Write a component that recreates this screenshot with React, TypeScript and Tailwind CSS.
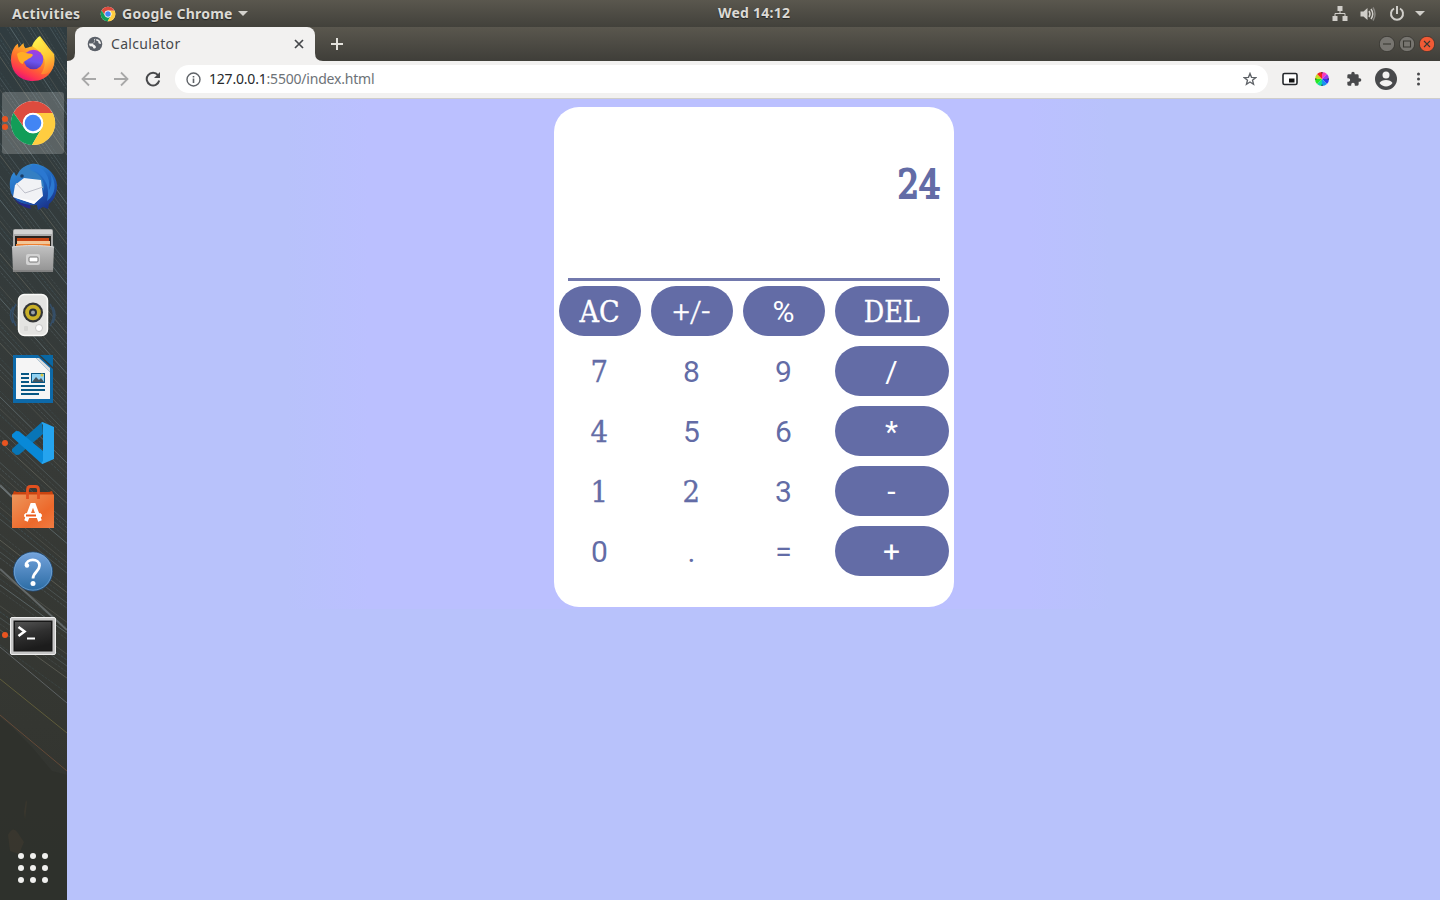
import React from "react";

const Chrome = ({ className }: { className: string }) => (
  <svg viewBox="0 0 48 48" className={className}>
    <circle cx="24" cy="24" r="22" fill="#fff" />
    <path d="M4.500 13.700A22 22 0 0 1 43.500 14H24A10 10 0 0 0 15.400 29Z" fill="#dd4b3e" />
    <path d="M4.500 13.700A22 22 0 0 0 23 46L33 29A10 10 0 0 1 15.300 29Z" fill="#129d58" />
    <path d="M43.700 14A22 22 0 0 1 23 46L32.700 29A10 10 0 0 0 24 14Z" fill="#ffcd40" />
    <circle cx="24" cy="24" r="10.3" fill="#fff" />
    <circle cx="24" cy="24" r="8.3" fill="#4285f4" />
  </svg>
);

const Firefox = () => (
  <svg viewBox="0 0 48 48" className="size-12">
    <defs>
      <linearGradient id="ffBody" x1="0.8" y1="0" x2="0.3" y2="1">
        <stop offset="0" stopColor="#fff04a" />
        <stop offset="0.35" stopColor="#ffb429" />
        <stop offset="0.65" stopColor="#ff6a2f" />
        <stop offset="0.85" stopColor="#ff3650" />
        <stop offset="1" stopColor="#e3107c" />
      </linearGradient>
      <linearGradient id="ffGlobe" x1="0.6" y1="0" x2="0.4" y2="1">
        <stop offset="0" stopColor="#a83be0" />
        <stop offset="0.6" stopColor="#6b55ee" />
        <stop offset="1" stopColor="#5534b0" />
      </linearGradient>
      <linearGradient id="ffTail" x1="0.3" y1="0" x2="0.6" y2="1">
        <stop offset="0" stopColor="#fff650" />
        <stop offset="0.6" stopColor="#ffc832" />
        <stop offset="1" stopColor="#ff8030" />
      </linearGradient>
    </defs>
    <path d="M5 13c.8-1.600 2.400-3.500 4-4.300 0 1.500.2 3 .8 4L14.500 8c.1 2 .7 4 2.100 5.200L24 11l4-5 3-5 9 12 5 6c3 14-6 27-21 27C10 46 2 36 2 24c0-4 1-8 3-11z" fill="url(#ffBody)" />
    <path d="M23 11C25 6 28 3 30.500 1c.5 4 3.500 7 6 10 1 1.500 2 3 2.500 5l1-2c5 5 6 12 4 18-2 5-7 8-12 7 4-6 5-13 2-18-2-4-6-7-11-10z" fill="url(#ffTail)" />
    <circle cx="24.500" cy="24.500" r="9.800" fill="url(#ffGlobe)" />
    <path d="M8 19c3-3 7-2 9-1 3 1 6 0 7 2-1 2-3 3-5 4-2 2-5 2-5 5-4-1-5-5-6-10z" fill="#ffad25" />
  </svg>
);

const Thunderbird = () => (
  <svg viewBox="0 0 48 48" className="size-12">
    <defs>
      <linearGradient id="tb" x1="0.2" y1="0" x2="0.8" y2="1">
        <stop offset="0" stopColor="#358fd8" />
        <stop offset="0.55" stopColor="#1e62bd" />
        <stop offset="1" stopColor="#1a2f86" />
      </linearGradient>
    </defs>
    <path d="M12 8C17 1 24-1 31 2c10 3 18 13 17 23-1 8-4 13-8 16l-1 5-5-2-5 3-1-5C15 43 6 39 2 30 0 22 0 15 5 9l2 4z" fill="url(#tb)" />
    <path d="M8 14c1-7 7-12 14-12 2 2-2 5 1 6 8 3 13 9 12 20-2-7-6-11-14-13z" fill="#347fc3" />
    <path d="M24 1c11 4 18 12 16 26 3-6 3-12 1-17 7 10 6 21-3 28 2-8 1-15-2-20-4-7-9-11-16-12z" fill="#2b78d1" />
    <path d="M6 22 15 15l17 2 2 16-9 8L4 34z" fill="#f1f2f5" />
    <path d="m7 20 9 10 18-6" fill="none" stroke="#bdbfc9" strokeWidth="1" />
    <path d="m4 34 22 4 8-6-9 9z" fill="#fff" />
    <path d="M3 32c3 6 9 9 18 10l1 4c-9-2-16-7-19-14z" fill="#25278a" />
    <circle cx="13" cy="13" r="1.800" fill="#1a3e68" />
  </svg>
);

const Files = () => (
  <svg viewBox="0 0 48 48" className="size-12">
    <defs>
      <linearGradient id="cab" x2="0" y2="1"><stop stopColor="#c2c2c2" /><stop offset="1" stopColor="#929292" /></linearGradient>
    </defs>
    <rect x="4" y="2" width="40" height="43" rx="2" fill="#acacac" />
    <path d="M5 3h38v4H5z" fill="#d2d2d2" />
    <rect x="6" y="9" width="36" height="12" fill="#28231f" />
    <path d="M8 11h10l2 0h20v8H8z" fill="#c84513" />
    <path d="M8 14h33v3H8z" fill="#f3c697" /><path d="M7 17h34v4H7z" fill="#ee8030" />
    <path d="M3 20c13-2 29-2 42 0l-1 25H4z" fill="url(#cab)" />
    <path d="M3 20c13-2 29-2 42 0" fill="none" stroke="#ddd" />
    <rect x="17" y="27" width="14" height="11" rx="2" fill="#d2d2d2" />
    <rect x="20" y="30" width="9" height="5" rx="1" fill="#fff" stroke="#777" />
    <path d="M4 44h40" stroke="#707070" />
  </svg>
);

const Speaker = () => (
  <svg viewBox="0 0 48 48" className="size-12">
    <g fill="none" stroke="#354e67" strokeWidth="1.500">
      <path d="M7 13Q0 24 7 35M41 13q7 11 0 22M4 16q-5 8 0 16M44 16q4 8 0 16" />
    </g>
    <rect x="9.500" y="3.500" width="29" height="41" rx="6" fill="#e4e4e2" stroke="#fafaf8" strokeWidth="1.500" />
    <circle cx="24" cy="21.500" r="10" fill="#343638" />
    <circle cx="24" cy="21.500" r="7.800" fill="#c9b028" />
    <circle cx="24" cy="21.500" r="4" fill="#29303a" />
    <circle cx="24" cy="21.500" r="2" fill="#9ba2a8" />
    <circle cx="30" cy="37" r="3.500" fill="#fff" stroke="#c6c6c4" />
    <rect x="15" y="35" width="4" height="5" rx="1" fill="#d6d6d4" />
  </svg>
);

const Writer = () => (
  <svg viewBox="0 0 48 48" className="size-12">
    <path d="M4 0h25l15 14v34H4z" fill="#0d69a9" />
    <path d="M31 0h13v12z" fill="#0867a4" />
    <path d="M7 3h20l14 14v27H7z" fill="#f5f5f5" />
    <path d="m27 3 14 14v-4L30 3z" fill="#ddd" />
    <g fill="#075784"><path d="M12 18h8v2h-8zM12 22h8v2h-8zM12 26h8v2h-8zM12 30h24v2H12zM12 34h24v2H12zM12 38h18v2H12z" /></g>
    <rect x="22" y="18" width="14" height="10" fill="#075784" />
    <rect x="23" y="19" width="12" height="8" fill="#91d2f2" />
    <path d="m23 27 4-5 3 3 2-2 3 4z" fill="#44545e" /><circle cx="33" cy="20" r="1.500" fill="#d9c843" />
  </svg>
);

const Code = () => (
  <svg viewBox="0 0 48 48" className="size-12">
    <path d="M33 3 3 30v2.500L7 36l3-.3L34 15z" fill="#0875b6" />
    <path d="M3 15.500 7 12l3 .3L34 32v13l-1.500-.5L3 18z" fill="#0889d8" />
    <path d="m33.500 3 11.500 5v32l-11.500 5-1-1L34 42V6l-1.500-2.300z" fill="#25a4ef" />
  </svg>
);

const Store = () => (
  <svg viewBox="0 0 48 48" className="size-12">
    <defs><linearGradient id="bag" x2="1" y2="1"><stop stopColor="#ed965c" /><stop offset="0.65" stopColor="#ed692b" /><stop offset="1" stopColor="#f07b42" /></linearGradient></defs>
    <path d="m5 8 3 1h32l3-1 2 5H3z" fill="#c9430f" />
    <path d="M3 11.500h42V45H3z" fill="url(#bag)" />
    <path d="M18.500 16V7q0-3.500 3-3.500h5q3 0 3 3.500v9" fill="none" stroke="#e2501f" strokeWidth="2.800" />
    <path d="m17 38 6-16h2l6 16" fill="none" stroke="#fff" strokeWidth="3.800" />
    <rect x="15.500" y="30.500" width="17" height="4" rx="2" fill="#fff" stroke="#fff" strokeWidth="1" />
    <path d="M17 32.500h10" stroke="#ed5a1b" strokeWidth="2" />
  </svg>
);

const Help = () => (
  <svg viewBox="0 0 48 48" className="size-12">
    <defs><linearGradient id="help" x2="0" y2="1"><stop stopColor="#74a3dc" /><stop offset="1" stopColor="#2a6ba3" /></linearGradient></defs>
    <circle cx="24" cy="24.500" r="19.500" fill="url(#help)" stroke="#234e7c" />
    <circle cx="24" cy="24.500" r="18.700" fill="none" stroke="#82b2df" strokeOpacity=".6" />
    <path d="M17 18.500C17 11 30.500 11 30.500 18.500c0 6-6.500 6.500-6.500 13" fill="none" stroke="#fff" strokeWidth="2.800" />
    <circle cx="18" cy="18.500" r="2.200" fill="#fff" /><circle cx="24" cy="36.500" r="2.500" fill="#fff" />
  </svg>
);

const Term = () => (
  <svg viewBox="0 0 48 48" className="size-12">
    <defs><linearGradient id="term" x2="0.3" y2="1"><stop stopColor="#535353" /><stop offset="0.5" stopColor="#303030" /><stop offset="1" stopColor="#1c1c1c" /></linearGradient></defs>
    <rect x="1.500" y="6.500" width="45" height="37" rx="1.500" fill="#c6c6c6" stroke="#eee" />
    <rect x="4.500" y="9.500" width="39" height="31" fill="#171717" />
    <rect x="6" y="11" width="36" height="28" fill="url(#term)" />
    <path d="m9.500 16 6 4.500-6 4.500" fill="none" stroke="#fff" strokeWidth="2.600" /><path d="M18 27.500h8" stroke="#fff" strokeWidth="2" />
  </svg>
);

const dock = [
  { icon: <Firefox />, dots: 0 },
  { icon: <Chrome className="size-12" />, dots: 2 },
  { icon: <Thunderbird />, dots: 0 },
  { icon: <Files />, dots: 0 },
  { icon: <Speaker />, dots: 0 },
  { icon: <Writer />, dots: 0 },
  { icon: <Code />, dots: 1 },
  { icon: <Store />, dots: 0 },
  { icon: <Help />, dots: 0 },
  { icon: <Term />, dots: 1 },
];

const Wallpaper = () => (
  <svg className="absolute inset-0 h-full w-full" viewBox="0 0 67 873" preserveAspectRatio="none">
    <defs>
      <linearGradient id="wall" x2="0" y2="1"><stop stopColor="#303c40" /><stop offset=".5" stopColor="#373a37" /><stop offset=".8" stopColor="#343631" /><stop offset="1" stopColor="#30322e" /></linearGradient>
    </defs>
    <rect width="67" height="873" fill="url(#wall)" />
    <g fill="none" strokeWidth=".8">
      {Array.from({ length: 92 }, (_, i) => {
        const y = -120 + i * 8 + ((i * 7) % 9);
        const rise = Math.max(54, 125 - i * 0.85);
        return <path key={i} d={`M-4 ${y}L71 ${y + rise}`} stroke={["#7c8f94", "#59666a", "#7b7b6f", "#496068"][i % 4]} strokeOpacity={i % 3 ? 0.38 : 0.62} strokeDasharray={i % 2 ? "3 1" : undefined} />;
      })}
      <path d="M0 620l67 56" stroke="#899299" strokeOpacity=".6" />
      <path d="m0 652 67 54" stroke="#827b43" strokeOpacity=".7" />
      <path d="m0 688 67 56" stroke="#8b5a3d" strokeOpacity=".7" />
      <path d="m0 458 12 12M0 542l67 61" stroke="#7f8688" strokeOpacity=".6" strokeWidth="2" />
    </g>
    <path d="M0 690l12 10 20 20 20 24 15 4v125H0z" fill="#2f312c" fillOpacity=".9" />
    <path d="M8 808q5-10 10-2t6 9l-5 12-9-3zM24 785l2-12 1 2-2 18z" fill="#574735" fillOpacity=".25" />
  </svg>
);

const SERIF = "font-['DejaVu_Serif'] text-[29px] [-webkit-text-stroke:0.35px_currentColor]";
const SANS = "font-['Roboto'] text-[30px]";

const keys: { label: string; kind: "serif" | "sans"; dark?: boolean; squeeze?: string }[] = [
  { label: "AC", kind: "serif", dark: true, squeeze: "scale-x-[0.93]" },
  { label: "+/-", kind: "sans", dark: true, squeeze: "font-light [-webkit-text-stroke:0.4px_currentColor]" },
  { label: "%", kind: "sans", dark: true },
  { label: "DEL", kind: "serif", dark: true, squeeze: "scale-x-[0.88]" },
  { label: "7", kind: "serif" }, { label: "8", kind: "sans" }, { label: "9", kind: "sans" },
  { label: "/", kind: "sans", dark: true },
  { label: "4", kind: "serif" }, { label: "5", kind: "sans" }, { label: "6", kind: "sans" },
  { label: "*", kind: "sans", dark: true },
  { label: "1", kind: "serif" }, { label: "2", kind: "serif" }, { label: "3", kind: "sans" },
  { label: "-", kind: "sans", dark: true },
  { label: "0", kind: "sans" }, { label: ".", kind: "sans" }, { label: "=", kind: "sans" },
  { label: "+", kind: "sans", dark: true },
];

function Calculator() {
  return (
    <div className="flex h-[500px] w-[400px] flex-col rounded-[25px] bg-white px-[5px] text-[#636ca6]">
      <div className="mx-[9px] flex h-[174px] justify-end border-b-[3px] border-[#7279ad] pt-[54px]">
        <span className="-mr-px block h-12 origin-right scale-x-[0.87] font-['DejaVu_Serif'] text-[39px] leading-[48px] [-webkit-text-stroke:2px_currentColor]">24</span>
      </div>
      <div className="mt-[5px] grid grid-cols-[82px_82px_82px_114px] gap-[10px]">
        {keys.map((k) => (
          <button key={k.label} className={`flex h-[50px] items-center justify-center rounded-[25px] pt-[2px] ${k.dark ? "bg-[#636ca6] text-white" : "bg-white"}`}>
            <span className={`${k.kind === "serif" ? SERIF : SANS} leading-[40px] ${k.squeeze ?? (k.kind === "serif" ? "scale-x-[0.95]" : "")}`}>{k.label}</span>
          </button>
        ))}
      </div>
    </div>
  );
}

export default function App() {
  return (
    <div className="flex h-[900px] w-[1440px] flex-col overflow-hidden font-['Noto_Sans',sans-serif]">
      <header className="grid h-[27px] shrink-0 grid-cols-3 items-center bg-linear-to-b from-[#5a574e] to-[#42413b] text-[14px] font-bold text-[#dcdad5] [text-shadow:0_1px_1px_#222]">
        <div className="flex items-center pl-3">
          <span className="w-[88px] whitespace-nowrap tracking-[0.35px]">Activities</span>
          <Chrome className="size-4" />
          <span className="ml-[6px] w-[111px] whitespace-nowrap tracking-[0.25px]">Google Chrome</span>
          <svg className="ml-[5px] h-[5px] w-[10px]" viewBox="0 0 10 5"><path d="M0 0h10L5 5z" fill="#d4d2cd" /></svg>
        </div>
        <div className="-mt-[2px] pl-[238px] whitespace-nowrap tracking-[0.25px]">Wed 14:12</div>
        <div className="flex items-center justify-end pr-[15px]">
          <svg className="size-4" viewBox="0 0 16 16" fill="#d0cec9"><path d="M5.500 0h5v5h-5zM.5 10h5v5h-5zM10.500 10h5v5h-5z" /><path d="M8 4v4M3 11V7.500h10V11" fill="none" stroke="#d0cec9" /></svg>
          <svg className="ml-3 h-4 w-4" viewBox="0 0 16 16"><path d="M.5 5.500h3l4-3.500v12l-4-3.500h-3z" fill="#d0cec9" /><path d="M9 5q2 3 0 6M11 3q3.500 5 0 10" fill="none" stroke="#d0cec9" strokeWidth="1.500" /><path d="M13 1.500q4 6.500 0 13" fill="none" stroke="#878580" strokeWidth="1.500" /></svg>
          <svg className="ml-[13px] size-4" viewBox="0 0 16 16" fill="none" stroke="#d0cec9" strokeWidth="2"><path d="M5 2.500a6 6 0 1 0 6 0M8 0v8" /></svg>
          <svg className="ml-[10px] h-[5px] w-[10px]" viewBox="0 0 10 5"><path d="M0 0h10L5 5z" fill="#d0cec9" /></svg>
        </div>
      </header>
      <div className="flex min-h-0 flex-1">
        <aside className="relative w-[67px] shrink-0">
          <Wallpaper />
          <div className="relative flex h-full flex-col">
            {dock.map((d, i) => (
              <div key={i} className={`relative ml-[2px] flex w-[62px] items-center justify-center ${i === 1 ? "my-px h-[62px] rounded-[3px] bg-white/20" : "h-16"}`}>
                {d.icon}
                <div className="absolute inset-y-0 left-0 flex flex-col justify-center gap-[2px]">
                  {Array.from({ length: d.dots }, (_, n) => <i key={n} className="block size-[6px] rounded-full bg-[#e95420]" />)}
                </div>
              </div>
            ))}
            <svg className="mt-auto mb-[15px] ml-[16px] h-[34px] w-[34px]" viewBox="0 0 34 34" fill="#f0f0ee">
              {[5, 17, 29].flatMap((y) => [5, 17, 29].map((x) => <circle key={`${x}-${y}`} cx={x} cy={y} r="3" />))}
            </svg>
          </div>
        </aside>
        <main className="flex min-w-0 flex-1 flex-col">
          <div className="flex h-[34px] shrink-0 bg-linear-to-b from-[#5a574e] to-[#3f3e39]">
            <div className="flex w-2 items-end">
              <svg className="size-2" viewBox="0 0 8 8"><path d="M8 0v8H0Q8 8 8 0z" fill="#f2f1f0" /></svg>
            </div>
            <div className="flex w-60 items-center rounded-t-[8px] bg-[#f2f1f0] pl-3 text-[14px] text-[#47494c]">
              <svg className="size-4" viewBox="0 0 16 16"><circle cx="8" cy="8" r="7.300" fill="#5b6068" /><path d="M8.500 2.500C7 3 6.500 4 7.500 5S6.500 7.500 5 7.500H2c0 1 .3 2 1 3 1-.5 2-.3 3 .5 0 1 .5 1.500 1.500 1.500S9.500 11.500 8.500 10s-2-1-2.500-2M9.500 3c-.8 1-.3 2 1 2s.5 2 1.500 2.500 1.500.5 2 .3C13.800 5.500 12 3.200 9.500 3z" fill="#f2f1f0" /></svg>
              <span className="-mt-[2px] ml-2 w-[183px] whitespace-nowrap tracking-[0.3px]">Calculator</span>
              <svg className="size-[10px]" viewBox="0 0 10 10" stroke="#45474a" strokeWidth="1.700"><path d="m1 1 8 8M9 1 1 9" /></svg>
            </div>
            <div className="flex w-2 items-end">
              <svg className="size-2" viewBox="0 0 8 8"><path d="M0 0v8h8Q0 8 0 0z" fill="#f2f1f0" /></svg>
            </div>
            <svg className="mt-[11px] ml-2 size-3" viewBox="0 0 12 12" stroke="#e4e2dd" strokeWidth="2"><path d="M0 6h12M6 0v12" /></svg>
            <div className="ml-auto flex items-center gap-1 pr-[5px]">
              {["M4 8h8", "M4.500 5h7v6h-7z", "m5 5 6 6m0-6-6 6"].map((p, i) => (
                <svg key={p} className="size-4" viewBox="0 0 16 16"><circle cx="8" cy="8" r="7.700" fill={i === 2 ? "#f15a35" : "#777570"} stroke="#35342f" strokeWidth=".8" /><path d={p} fill="none" stroke="#393832" strokeWidth="1.100" /></svg>
              ))}
            </div>
          </div>
          <div className="flex h-[38px] shrink-0 items-center border-b border-[#cecdcb] bg-[#f2f1f0] pl-[14px] pb-px">
            <svg className="size-4" viewBox="0 0 16 16" fill="none" stroke="#a8a8a8" strokeWidth="1.800"><path d="M15 8H2M8 1.500 1.500 8 8 14.500" /></svg>
            <svg className="ml-4 size-4" viewBox="0 0 16 16" fill="none" stroke="#a8a8a8" strokeWidth="1.800"><path d="M1 8h13M8 1.500 14.500 8 8 14.500" /></svg>
            <svg className="ml-4 size-4" viewBox="0 0 16 16"><path d="M13 4.200A6.300 6.300 0 1 0 14.200 9.500" fill="none" stroke="#48494b" strokeWidth="2" /><path d="M15 1v6H9z" fill="#48494b" /></svg>
            <div className="ml-[14px] flex h-7 w-[1093px] items-center rounded-full bg-white pl-[11px] pr-[11px]">
              <svg className="size-[15px]" viewBox="0 0 15 15"><circle cx="7.500" cy="7.500" r="6.500" fill="none" stroke="#5f6368" strokeWidth="1.400" /><path d="M6.700 6.500h1.600V11H6.700zM6.700 4h1.600v1.600H6.700z" fill="#5f6368" /></svg>
              <span className="-mt-[2px] ml-2 whitespace-nowrap text-[14px] tracking-[-0.2px] text-[#6d7277]"><span className="text-[#26292c]">127.0.0.1</span>:5500/index.html</span>
              <svg className="ml-auto size-[14px]" viewBox="0 0 24 24" fill="none" stroke="#5f6368" strokeWidth="2.300"><path d="m12 2.500 2.600 6.600 7.200.5-5.500 4.500 1.800 7-6.100-3.900-6.100 3.900 1.800-7-5.500-4.500 7.200-.5z" /></svg>
            </div>
            <svg className="ml-[14px] h-[14px] w-4" viewBox="0 0 16 14"><rect x="1" y="1.500" width="14" height="11" rx="1.500" fill="#fff" stroke="#24272b" strokeWidth="1.600" /><path d="M7 6.500h5.500v4H7z" fill="#111" /></svg>
            <svg className="ml-4 size-4" viewBox="0 0 16 16">
              {["#f93aba", "#9736ed", "#2939ee", "#1695ee", "#10db9c", "#25e726", "#c6df22", "#f72020"].map((c, i) => <path key={c} d="M8 8V1a7 7 0 0 1 4.950 2.050z" fill={c} transform={`rotate(${i * 45} 8 8)`} />)}
              <path d="M8 1v1.500M8 13.500V15M1 8h1.500M13.500 8H15" stroke="#333" strokeWidth="1" />
            </svg>
            <svg className="ml-4 size-4" viewBox="0 0 24 24" fill="#48494b"><path d="M20.500 11H19V7a2 2 0 0 0-2-2h-4V3.500a2.500 2.500 0 0 0-5 0V5H4a2 2 0 0 0-2 2v3.800h1.500a2.700 2.700 0 0 1 0 5.400H2V20a2 2 0 0 0 2 2h3.800v-1.500a2.700 2.700 0 0 1 5.400 0V22H17a2 2 0 0 0 2-2v-4h1.500a2.500 2.500 0 0 0 0-5z" /></svg>
            <svg className="ml-[13px] size-[22px]" viewBox="0 0 22 22"><circle cx="11" cy="11" r="11" fill="#48494b" /><circle cx="11" cy="7" r="3.500" fill="#f2f1f0" /><path d="M4.500 15c2-4 11-4 13 0-3 4.500-10 4.500-13 0z" fill="#f2f1f0" /></svg>
            <svg className="ml-[14px] h-4 w-[15px]" viewBox="0 0 15 16" fill="#48494b"><circle cx="7.500" cy="3" r="1.500" /><circle cx="7.500" cy="8" r="1.500" /><circle cx="7.500" cy="13" r="1.500" /></svg>
          </div>
          <div className="flex flex-1 justify-center bg-[#b8c2fb] bg-[linear-gradient(90deg,#b8c2fb_0%,#b8c2fb_16%,#bbc0ff_22%,#bbc0ff_70%,#b8c2fb_76%)] bg-[length:100%_510px] bg-no-repeat pt-2">
            <Calculator />
          </div>
        </main>
      </div>
    </div>
  );
}
